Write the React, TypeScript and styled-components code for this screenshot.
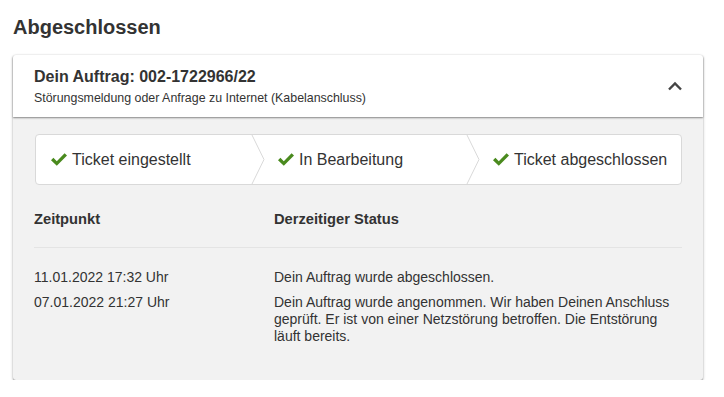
import React from "react";
import styled, { createGlobalStyle } from "styled-components";

const Global = createGlobalStyle`
  html, body { margin: 0; padding: 0; background: #ffffff; }
  body { font-family: "Liberation Sans", Arial, sans-serif; color: #333333; }
`;

const Page = styled.div`
  padding: 14px 21px 0 13px;
  width: 690px;
`;

const Title = styled.h1`
  margin: 0 0 15px 0;
  font-size: 20px;
  line-height: 26px;
  font-weight: bold;
  color: #333;
`;

const Card = styled.section`
  background: #f2f2f2;
  border-radius: 3px;
  box-shadow: 0 1px 3px rgba(0, 0, 0, 0.3), 0 1px 1px rgba(0, 0, 0, 0.25);
`;

const Header = styled.div`
  height: 62px;
  background: #fff;
  display: flex;
  align-items: center;
  justify-content: space-between;
  padding: 0 20px 0 21px;
  box-shadow: 0 1px 2px rgba(0, 0, 0, 0.45);
  border-radius: 3px 3px 0 0;
`;

const HeaderText = styled.div`
  display: flex;
  flex-direction: column;
  gap: 5px;
  padding-top: 1px;
`;

const OrderTitle = styled.div`
  font-size: 16px;
  font-weight: bold;
  line-height: 19px;
`;

const OrderSub = styled.div`
  font-size: 12.4px;
  line-height: 15px;
  color: #333;
`;

const Body = styled.div`
  padding: 17px 21px 35px 21px;
`;

const Steps = styled.div`
  display: flex;
  height: 49px;
  background: #fff;
  border: 1px solid #d9d9d9;
  border-radius: 4px;
  overflow: hidden;
  margin-left: 1px;
`;

const Step = styled.div<{ $first?: boolean }>`
  box-sizing: border-box;
  flex: 0 0 33.3333%;
  min-width: 0;
  display: flex;
  align-items: center;
  padding-left: ${(p) => (p.$first ? "14px" : "0")};
  font-size: 16px;
  color: #333;
  white-space: nowrap;
`;

const Chevron = styled.svg`
  width: 14px;
  height: 49px;
  flex: none;
  margin-right: 12px;
`;

const Check = styled.svg`
  width: 18px;
  height: 15px;
  margin-right: 4px;
  flex: none;
`;

const Table = styled.div`
  margin-top: 26px;
`;

const HeadRow = styled.div`
  display: grid;
  grid-template-columns: 240px 1fr;
  padding-bottom: 19px;
  border-bottom: 1px solid #e4e4e4;
  font-size: 14.7px;
  font-weight: bold;
  line-height: 17px;
`;

const Rows = styled.div`
  padding-top: 21px;
  display: flex;
  flex-direction: column;
  gap: 8px;
`;

const Row = styled.div`
  display: grid;
  grid-template-columns: 240px 1fr;
  font-size: 14px;
  line-height: 17px;
`;

const StatusText = styled.div`
  max-width: 410px;
`;

const CheckIcon = () => (
  <Check viewBox="0 0 18 15">
    <path d="M1 8.2 L3.4 5.8 L6.8 9.2 L14.6 1.2 L17 3.6 L6.8 13.8 Z" fill="#4a8a1e" />
  </Check>
);

const Sep = () => (
  <Chevron viewBox="0 0 14 49">
    <polyline points="0.5,-1 13,24.5 0.5,50" fill="none" stroke="#d9d9d9" strokeWidth="1" />
  </Chevron>
);

const steps = ["Ticket eingestellt", "In Bearbeitung", "Ticket abgeschlossen"];

const rows = [
  { time: "11.01.2022 17:32 Uhr", text: "Dein Auftrag wurde abgeschlossen." },
  {
    time: "07.01.2022 21:27 Uhr",
    text: "Dein Auftrag wurde angenommen. Wir haben Deinen Anschluss geprüft. Er ist von einer Netzstörung betroffen. Die Entstörung läuft bereits.",
  },
];

export default function App() {
  return (
    <>
      <Global />
      <Page>
        <Title>Abgeschlossen</Title>
        <Card>
          <Header>
            <HeaderText>
              <OrderTitle>Dein Auftrag: 002-1722966/22</OrderTitle>
              <OrderSub>Störungsmeldung oder Anfrage zu Internet (Kabelanschluss)</OrderSub>
            </HeaderText>
            <svg width="16" height="10" viewBox="0 0 16 10">
              <polyline points="2,8.5 8,2.5 14,8.5" fill="none" stroke="#444" strokeWidth="2.4" />
            </svg>
          </Header>
          <Body>
            <Steps>
              {steps.map((s, i) => (
                <Step key={s} $first={i === 0}>
                  {i > 0 && <Sep />}
                  <CheckIcon />
                  {s}
                </Step>
              ))}
            </Steps>
            <Table>
              <HeadRow>
                <div>Zeitpunkt</div>
                <div>Derzeitiger Status</div>
              </HeadRow>
              <Rows>
                {rows.map((r) => (
                  <Row key={r.time}>
                    <div>{r.time}</div>
                    <StatusText>{r.text}</StatusText>
                  </Row>
                ))}
              </Rows>
            </Table>
          </Body>
        </Card>
      </Page>
    </>
  );
}
